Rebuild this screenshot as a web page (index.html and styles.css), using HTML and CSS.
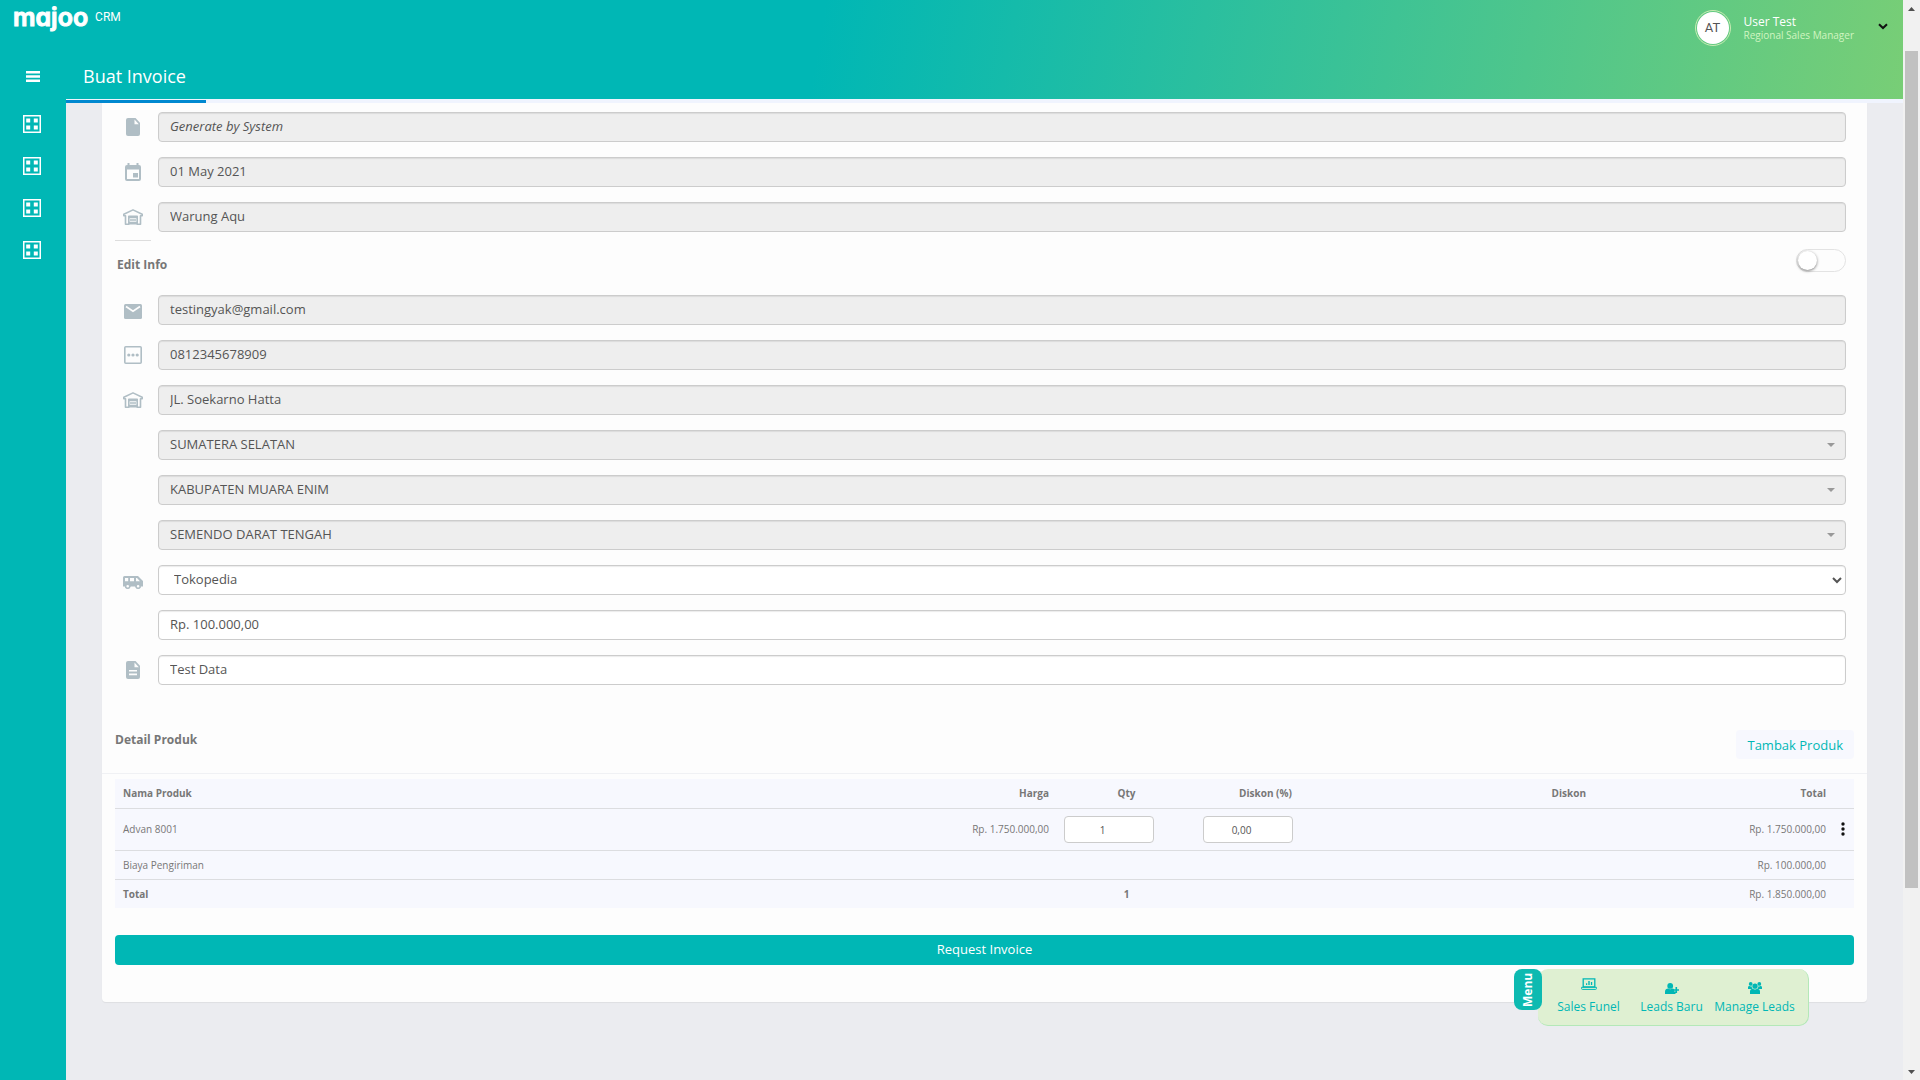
FILE: index.html
```html
<!DOCTYPE html>
<html lang="id">
<head>
<meta charset="utf-8">
<meta name="viewport" content="width=device-width, initial-scale=1">
<title>Buat Invoice - majoo CRM</title>
<link rel="stylesheet" href="styles.css">
</head>
<body>
<svg class="defs" aria-hidden="true">
  <symbol id="i-grid" viewBox="0 0 18 18"><path fill-rule="evenodd" d="M0 0h18v18H0zM1.500 1.500v15h15v-15zM3.200 3.500h4v4h-4zM10.800 3.500h4v4h-4zM3.200 10.500h4v4h-4zM10.800 10.500h4v4h-4z"/></symbol>
  <symbol id="i-store" viewBox="0 0 20 16"><path fill="none" stroke="currentColor" stroke-width="1.6" stroke-linejoin="round" d="M.8 5.200 10 .9l9.200 4.300v1.600h-1.700v8.400h-3.300V7.200H5.800v8H2.500V6.800H.8z"/><path d="M6 7.500h8v1.700H6zM7 10.300h6v1.400H7zM6 12.800h8v2.600H6z"/></symbol>
</svg>
<div class="window">
  <div class="app">
    <header class="header">
      <div class="topbar">
        <a class="brand" href="#"><span class="brand-name">majoo</span><span class="brand-sub">CRM</span></a>
        <button class="user" type="button">
          <span class="avatar">AT</span>
          <span class="user-text"><span class="user-name">User Test</span><span class="user-role">Regional Sales Manager</span></span>
          <svg class="user-arrow" width="10" height="7" viewBox="0 0 10 7"><path d="M1 1.200 5 5l4-3.800" fill="none" stroke="#111" stroke-width="2"/></svg>
        </button>
      </div>
      <div class="titlebar">
        <button class="burger" type="button" aria-label="Menu"><svg width="14" height="11" viewBox="0 0 14 11" fill="#fff"><path d="M0 0h14v2.500H0zM0 4.250h14v2.500H0zM0 8.500h14V11H0z"/></svg></button>
        <h1 class="title">Buat Invoice</h1>
      </div>
    </header>
    <div class="body">
      <nav class="sidebar" aria-label="Navigasi">
        <a href="#" aria-label="Menu 1"><svg width="18" height="18"><use href="#i-grid"/></svg></a>
        <a href="#" aria-label="Menu 2"><svg width="18" height="18"><use href="#i-grid"/></svg></a>
        <a href="#" aria-label="Menu 3"><svg width="18" height="18"><use href="#i-grid"/></svg></a>
        <a href="#" aria-label="Menu 4"><svg width="18" height="18"><use href="#i-grid"/></svg></a>
      </nav>
      <main class="main">
        <div class="loading"><div class="loading-bar"></div></div>
        <form class="card">
          <div class="fields">
            <div class="row">
              <svg width="14" height="18" viewBox="0 0 14 18"><path d="M2 0h7.500L14 4.800V16a2 2 0 0 1-2 2H2a2 2 0 0 1-2-2V2a2 2 0 0 1 2-2z"/><path d="M8.500 1.500v4.800h4.300z" fill="#fdfdfd"/></svg>
              <input class="control" type="text" placeholder="Generate by System" aria-label="Nomor invoice" disabled>
            </div>
            <div class="row">
              <svg width="16" height="18" viewBox="0 0 16 18"><path fill-rule="evenodd" d="M2.500 0h2v2h7V0h2v2h.5a2 2 0 0 1 2 2v12a2 2 0 0 1-2 2H2a2 2 0 0 1-2-2V4a2 2 0 0 1 2-2h.5zM2 6.500V16h12V6.500zM8 10h5v4.500H8z"/></svg>
              <input class="control" type="text" value="01 May 2021" aria-label="Tanggal" disabled>
            </div>
            <div class="row">
              <svg width="20" height="16"><use href="#i-store"/></svg>
              <input class="control" type="text" value="Warung Aqu" aria-label="Outlet" disabled>
            </div>
          </div>
          <div class="edit">
            <label class="section-label" for="edit-info">Edit Info</label>
            <input class="switch" id="edit-info" type="checkbox" role="switch">
          </div>
          <div class="fields">
            <div class="row">
              <svg class="low" width="18" height="15" viewBox="0 0 18 15"><rect width="18" height="15" rx="1.500"/><path d="m2 2.500 7 4.800 7-4.800" fill="none" stroke="#fdfdfd" stroke-width="1.700"/></svg>
              <input class="control" type="email" value="testingyak@gmail.com" aria-label="Email" disabled>
            </div>
            <div class="row">
              <svg width="18" height="18" viewBox="0 0 18 18"><rect x=".8" y=".8" width="16.400" height="16.400" rx="1" fill="none" stroke="currentColor" stroke-width="1.600"/><circle cx="4.800" cy="9" r="1.600"/><circle cx="9" cy="9" r="1.600"/><circle cx="13.200" cy="9" r="1.600"/></svg>
              <input class="control" type="tel" value="0812345678909" aria-label="Telepon" disabled>
            </div>
            <div class="row">
              <svg width="20" height="16"><use href="#i-store"/></svg>
              <input class="control" type="text" value="JL. Soekarno Hatta" aria-label="Alamat" disabled>
            </div>
            <div class="row"><div class="picker"><select class="control" aria-label="Provinsi" disabled><option>SUMATERA SELATAN</option></select></div></div>
            <div class="row"><div class="picker"><select class="control" aria-label="Kabupaten" disabled><option>KABUPATEN MUARA ENIM</option></select></div></div>
            <div class="row"><div class="picker"><select class="control" aria-label="Kecamatan" disabled><option>SEMENDO DARAT TENGAH</option></select></div></div>
            <div class="row">
              <svg class="low" width="20" height="13" viewBox="0 0 20 13"><path fill-rule="evenodd" d="M1.500 0H15l5 5v5.500h-2a3 3 0 0 1-5.800 0H7.600a3 3 0 0 1-5.800 0H0v-9A1.500 1.500 0 0 1 1.500 0zM2 2v3.200h3.200V2zM7 2v3.200h4V2zM13 2v3.200h4L14 2z"/><circle cx="4.700" cy="10.300" r="2" fill="#fdfdfd" stroke="currentColor" stroke-width="1.400"/><circle cx="15.100" cy="10.300" r="2" fill="#fdfdfd" stroke="currentColor" stroke-width="1.400"/></svg>
              <select class="control native" aria-label="Pengiriman"><option>Tokopedia</option></select>
            </div>
            <div class="row"><input class="control" type="text" value="Rp. 100.000,00" aria-label="Biaya pengiriman"></div>
            <div class="row">
              <svg width="14" height="18" viewBox="0 0 14 18"><path d="M2 0h7.500L14 4.800V16a2 2 0 0 1-2 2H2a2 2 0 0 1-2-2V2a2 2 0 0 1 2-2z"/><path d="M8.500 1.500v4.800h4.300zM3 9h8v1.600H3zM3 12.600h8v1.600H3z" fill="#fdfdfd"/></svg>
              <input class="control" type="text" value="Test Data" aria-label="Catatan">
            </div>
          </div>
          <div class="detail-head">
            <h2 class="section-label">Detail Produk</h2>
            <button class="add" type="button">Tambak Produk</button>
          </div>
          <div class="detail">
            <table class="products">
              <colgroup><col><col class="c-price"><col class="c-qty"><col class="c-qty"><col class="c-disc"><col class="c-total"><col class="c-act"></colgroup>
              <thead>
                <tr><th class="start">Nama Produk</th><th>Harga</th><th class="mid">Qty</th><th class="mid">Diskon (%)</th><th>Diskon</th><th>Total</th><td></td></tr>
              </thead>
              <tbody>
                <tr class="item"><td class="start">Advan 8001</td><td>Rp. 1.750.000,00</td><td class="entry"><input type="text" value="1" aria-label="Qty"></td><td class="entry"><input type="text" value="0,00" aria-label="Diskon (%)"></td><td></td><td>Rp. 1.750.000,00</td><td class="act"><button class="more" type="button" aria-label="Opsi"><svg width="4" height="14" viewBox="0 0 4 14"><circle cx="2" cy="2" r="1.700"/><circle cx="2" cy="7" r="1.700"/><circle cx="2" cy="12" r="1.700"/></svg></button></td></tr>
                <tr><td class="start">Biaya Pengiriman</td><td></td><td></td><td></td><td></td><td>Rp. 100.000,00</td><td></td></tr>
              </tbody>
              <tfoot>
                <tr><th class="start">Total</th><td></td><th class="mid">1</th><td></td><td></td><td>Rp. 1.850.000,00</td><td></td></tr>
              </tfoot>
            </table>
            <button class="submit" type="submit">Request Invoice</button>
          </div>
        </form>
      </main>
    </div>
    <div class="quick">
      <button class="quick-tab" type="button">Menu</button>
      <nav class="quick-panel" aria-label="Menu cepat">
        <a href="#"><svg class="raised" width="16" height="12" viewBox="0 0 16 12"><path d="M2.200.8h11.600v8H2.200z" fill="none" stroke="currentColor" stroke-width="1.300"/><path d="M5 5.300h1.200V7H5zM7.300 3h1.400v4H7.300zM9.900 4h1.300v3H9.900z"/><path d="M.6 9.300h14.800v1.300a.8.800 0 0 1-.8.800H1.400a.8.800 0 0 1-.8-.8z" fill="none" stroke="currentColor" stroke-width="1"/></svg>Sales Funel</a>
        <a href="#"><svg width="14" height="11" viewBox="0 0 14 11"><circle cx="5.200" cy="2.900" r="2.900"/><path d="M0 11V8.800C0 6.600 1.500 5.500 3 5.500c1.300 1 3.100 1 4.400 0 .7 0 1.300.3 1.800.7v2.300h1.300V11zM10.500 4h1.600v2.200H14v1.600h-1.900V10h-1.600V7.800H8.600V6.200h1.900z"/></svg>Leads Baru</a>
        <a href="#"><svg width="14" height="12" viewBox="0 0 14 12"><circle cx="2.700" cy="1.900" r="1.900"/><circle cx="11.300" cy="1.900" r="1.900"/><circle cx="7" cy="4.200" r="2.600"/><path d="M0 7V5.500C0 4.300.8 4 1.500 4c.8.500 1.500.5 2.200.2C3.600 5.300 4 6.200 4.500 7zM14 7V5.500C14 4.300 13.200 4 12.500 4c-.8.500-1.500.5-2.200.2.100 1.100-.3 2-.8 2.800zM2 12V9.500C2 7.500 3.200 6.700 4.700 6.700c1.400 1 3.200 1 4.600 0C10.800 6.700 12 7.500 12 9.500V12z"/></svg>Manage Leads</a>
      </nav>
    </div>
  </div>
  <div class="scrollbar" aria-hidden="true">
    <svg width="17" height="17" viewBox="0 0 17 17"><path d="M5 11h7L8.500 7z"/></svg>
    <div class="track"><div class="thumb"></div></div>
    <svg width="17" height="17" viewBox="0 0 17 17"><path d="M5 7h7l-3.500 4z"/></svg>
  </div>
</div>
</body>
</html>
```
FILE: styles.css
```css
:root {
  --teal: #00b7b5;
  --line: #ccc;
  --muted: #777;
}

* { box-sizing: border-box; }

body {
  margin: 0;
  font: 13px/20px "Open Sans", sans-serif;
  color: #555;
  background: #ebecf0;
}

button, input, select { font: inherit; color: inherit; }
button { border: 0; padding: 0; background: none; cursor: pointer; }
a { color: inherit; text-decoration: none; }
svg { display: block; fill: currentColor; }
.defs { position: absolute; width: 0; height: 0; }

.window { display: flex; min-height: 100vh; }
.app { position: relative; flex: 1; display: flex; flex-direction: column; min-width: 0; }

/* Header */
.header {
  height: 99px;
  color: #fff;
  background: linear-gradient(100deg, var(--teal) 43%, #78ce76);
}
.topbar { display: flex; justify-content: space-between; height: 53px; padding: 0 15px 0 13px; }
.brand { display: flex; gap: 7px; height: 34px; align-items: center; }
.brand-name { font: 600 25px/34px Inter, sans-serif; font-feature-settings: "cv11"; -webkit-text-stroke: 1px #fff; }
.brand-sub { font: 12px/34px Roboto, sans-serif; }
.user { display: flex; align-items: center; padding-top: 3px; text-align: left; }
.avatar {
  width: 36px;
  height: 36px;
  border: 1px solid #c9ecb4;
  border-radius: 50%;
  background: #fff content-box;
  padding: 1px;
  font: 13px/32px Roboto, sans-serif;
  text-align: center;
  color: #555;
}
.user-text { display: flex; flex-direction: column; margin: 0 24px 0 13px; }
.user-name { font-size: 12px; line-height: 14px; }
.user-role { font-size: 10px; line-height: 12px; color: #d0f5c0; }
.user-arrow { margin: 0 0 4px; }
.titlebar { display: flex; align-items: center; height: 46px; }
.burger { display: flex; justify-content: center; width: 66px; }
.title { margin: 0; padding-left: 17px; font-size: 18px; font-weight: 400; line-height: 24px; }

/* Page body */
.body { display: flex; flex: 1; }
.sidebar {
  display: flex;
  flex-direction: column;
  gap: 24px;
  width: 66px;
  padding: 16px 0 0 23px;
  color: #fff;
  background: var(--teal);
}
.main { flex: 1; min-width: 0; }
.loading { height: 4px; padding-top: 1px; background: #f0f4fe; }
.loading-bar { width: 140px; height: 3px; background: #0088d0; }
.card {
  margin: 0 36px 76px;
  padding: 9px 0 37px;
  border-radius: 0 0 4px 4px;
  background: #fdfdfd;
  box-shadow: 0 1px 1px rgba(0, 0, 0, .06);
}

/* Form fields */
.fields { display: grid; gap: 15px; padding-right: 21px; }
.row { display: grid; grid-template-columns: 50px 1fr; align-items: center; padding-left: 6px; }
.row > svg { justify-self: center; color: #b0bec5; }
.row > svg.low { align-self: end; margin-bottom: 6px; }
.row > .control, .picker { grid-column: 2; }
.control {
  display: block;
  width: 100%;
  height: 30px;
  padding: 4px 11px 6px;
  border: 1px solid var(--line);
  border-radius: 4px;
  line-height: 18px;
  background: #fff;
  box-shadow: inset 0 1px 1px rgba(0, 0, 0, .08);
}
.control:disabled { color: #555; background: #eee; opacity: 1; }
.control::placeholder { color: #555; font-style: italic; opacity: 1; }
.control.native { padding: 3px 0 7px 11px; }
.picker { display: grid; align-items: center; }
.picker > * { grid-area: 1 / 1; }
.picker .control { appearance: none; }
.picker::after {
  content: "";
  grid-area: 1 / 1;
  justify-self: end;
  margin-right: 11px;
  border: solid transparent;
  border-width: 4px 4px 0;
  border-top-color: #999;
}

.edit {
  display: flex;
  justify-content: space-between;
  margin-top: 8px;
  padding: 9px 21px 20px 15px;
  background: linear-gradient(#ddd, #ddd) 13px 0 / 36px 1px no-repeat;
}
.section-label { margin: 0; font-size: 12px; line-height: 20px; font-weight: 700; color: var(--muted); }
.edit .section-label { padding-top: 6px; }
.switch {
  appearance: none;
  width: 50px;
  height: 23px;
  margin: 0;
  padding: 1px;
  border: 1px solid #e3e3e3;
  border-radius: 12px;
}
.switch::before {
  content: "";
  display: block;
  width: 19px;
  height: 19px;
  border-radius: 50%;
  background: #fff;
  box-shadow: 0 1px 3px rgba(0, 0, 0, .5);
}

/* Product details */
.detail-head {
  display: flex;
  justify-content: space-between;
  align-items: flex-start;
  margin-top: 45px;
  padding: 0 13px 14px;
  border-bottom: 1px solid #f0f1f4;
}
.add { height: 29px; padding: 0 11px; border-radius: 4px; color: var(--teal); background: #f7f8fe; }
.detail { padding: 5px 13px 0; }
.products {
  width: 100%;
  table-layout: fixed;
  border-collapse: collapse;
  font-size: 10px;
  line-height: 14px;
  color: var(--muted);
  background: #f7f8fe;
}
.c-price { width: 230px; }
.c-qty { width: 139px; }
.c-disc { width: 259px; }
.c-total { width: 240px; }
.c-act { width: 20px; }
.products th, .products td { height: 29px; padding: 0 8px; text-align: right; }
.products tr + tr > *, tbody tr > *, tfoot tr > * { border-top: 1px solid #dcdde0; }
.products .item > * { height: 42px; }
.products .start { text-align: left; }
.products .mid { text-align: center; }
.products .entry { padding: 0 7px; text-align: left; }
.entry input {
  display: block;
  width: 90px;
  height: 27px;
  padding: 2px 20px 0 7px;
  border: 1px solid var(--line);
  border-radius: 4px;
  text-align: center;
  color: #555;
  background: #fff;
}
.products .act { padding: 0 7px; }
.more { display: block; color: #111; }
.submit {
  display: block;
  width: 100%;
  height: 30px;
  margin-top: 27px;
  padding-bottom: 2px;
  border-radius: 4px;
  color: #fff;
  background: var(--teal);
}

/* Floating quick menu */
.quick { position: absolute; right: 94px; bottom: 54px; display: flex; align-items: flex-start; color: var(--teal); }
.quick-tab {
  z-index: 1;
  width: 28px;
  height: 41px;
  margin-right: -4px;
  border-radius: 8px;
  font-size: 12px;
  font-weight: 700;
  line-height: 28px;
  writing-mode: vertical-rl;
  transform: rotate(180deg);
  color: #fff;
  background: #0dbab1;
}
.quick-panel {
  display: grid;
  grid-template-columns: repeat(3, 83px);
  height: 57px;
  padding: 0 12px 0 9px;
  border: solid #b4e8b8;
  border-width: 0 1px 1px 0;
  border-radius: 10px;
  background: #dff0d2;
}
.quick-panel a {
  display: grid;
  grid-template-rows: 26px 20px;
  justify-items: center;
  align-items: end;
  row-gap: 2px;
  font-size: 12px;
  white-space: nowrap;
}
.quick-panel svg { margin-bottom: 1px; }
.quick-panel .raised { margin-bottom: 5px; }

/* Page scrollbar */
.scrollbar { display: flex; flex-direction: column; width: 17px; color: #505050; background: #f1f1f1; }
.track { flex: 1; display: grid; grid-template-rows: 34fr 837fr 175fr; padding: 0 2px; }
.thumb { grid-row: 2; background: #c1c1c1; }
```
